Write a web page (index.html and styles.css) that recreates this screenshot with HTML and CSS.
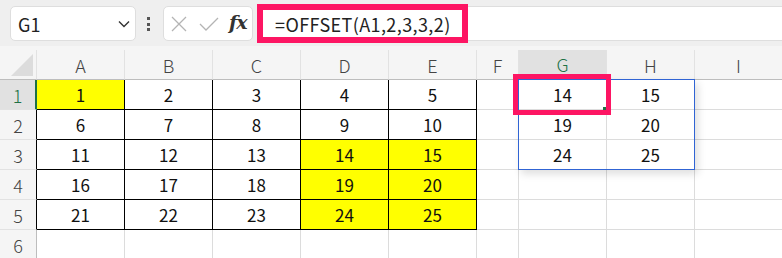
FILE: index.html
```html
<!DOCTYPE html>
<html lang="ja">
<head>
<meta charset="utf-8">
<link rel="stylesheet" href="styles.css">
</head>
<body>
<div class="toolbar">
  <div class="namebox">
    <span class="name">G1</span>
    <svg class="chev" width="12" height="8" viewBox="0 0 12 8"><path d="M1 1.5 L6 6.5 L11 1.5" fill="none" stroke="#333" stroke-width="1.4"/></svg>
  </div>
  <div class="vdots"><i></i><i></i><i></i></div>
  <div class="fbtns">
    <svg class="ico-x" width="16" height="16" viewBox="0 0 16 16"><path d="M1 1 L15 15 M15 1 L1 15" stroke="#b4b4b4" stroke-width="1.3" fill="none"/></svg>
    <svg class="ico-ok" width="20" height="14" viewBox="0 0 20 14"><path d="M1 7 L7 13 L19 1" stroke="#b4b4b4" stroke-width="1.3" fill="none"/></svg>
    <span class="fx">fx</span>
  </div>
  <div class="formula"><span class="ftext">=OFFSET(A1,2,3,3,2)</span></div>
  <div class="mark mark-formula"></div>
</div>
<div class="sheet">
  <div class="corner"><svg width="22" height="22" viewBox="0 0 22 22"><path d="M22 0 L22 22 L0 22 Z" fill="#dcdcdc"/></svg></div>
  <div class="ch">A</div><div class="ch">B</div><div class="ch">C</div><div class="ch">D</div><div class="ch">E</div><div class="ch">F</div><div class="ch sel">G</div><div class="ch">H</div><div class="ch">I</div>

  <div class="rh sel">1</div>
  <div class="c b y">1</div><div class="c b">2</div><div class="c b">3</div><div class="c b">4</div><div class="c b">5</div><div class="c"></div><div class="c">14</div><div class="c">15</div><div class="c"></div>

  <div class="rh bk">2</div>
  <div class="c b">6</div><div class="c b">7</div><div class="c b">8</div><div class="c b">9</div><div class="c b">10</div><div class="c"></div><div class="c">19</div><div class="c">20</div><div class="c"></div>

  <div class="rh bk">3</div>
  <div class="c b">11</div><div class="c b">12</div><div class="c b">13</div><div class="c b y">14</div><div class="c b y">15</div><div class="c"></div><div class="c">24</div><div class="c">25</div><div class="c"></div>

  <div class="rh bk">4</div>
  <div class="c b">16</div><div class="c b">17</div><div class="c b">18</div><div class="c b y">19</div><div class="c b y">20</div><div class="c"></div><div class="c"></div><div class="c"></div><div class="c"></div>

  <div class="rh bk">5</div>
  <div class="c b">21</div><div class="c b">22</div><div class="c b">23</div><div class="c b y">24</div><div class="c b y">25</div><div class="c"></div><div class="c"></div><div class="c"></div><div class="c"></div>

  <div class="rh">6</div>
  <div class="c"></div><div class="c"></div><div class="c"></div><div class="c"></div><div class="c"></div><div class="c"></div><div class="c"></div><div class="c"></div><div class="c"></div>

  <div class="spill"></div>
  <div class="handle"></div>
  <div class="mark mark-cell"></div>
</div>
</body>
</html>
```
FILE: styles.css
```css
* { box-sizing: border-box; }
html, body { margin: 0; padding: 0; }
body {
  width: 782px;
  height: 258px;
  overflow: hidden;
  background: #efefef;
  font-family: "Noto Sans CJK JP", "Noto Sans", sans-serif;
  color: #111;
}
.toolbar {
  position: relative;
  height: 46px;
  display: flex;
  align-items: flex-start;
  padding: 6px 0 0 10px;
}
.namebox {
  width: 126px;
  height: 35px;
  background: #fff;
  border: 1px solid #dedede;
  border-radius: 5px;
  display: flex;
  align-items: center;
  justify-content: space-between;
  padding: 0 5px 0 7px;
}
.name { font-size: 18px; color: #222; line-height: 1; }
.chev { margin-top: 1px; }
.vdots {
  width: 4px;
  margin: 11px 12px 0 11px;
  display: flex;
  flex-direction: column;
  gap: 2.5px;
}
.vdots i { display: block; width: 3px; height: 3px; background: #555; }
.fbtns {
  width: 90px;
  height: 35px;
  background: #fff;
  border: 1px solid #dedede;
  border-radius: 5px;
  display: flex;
  align-items: center;
  padding: 0 0 0 7px;
}
.ico-x { margin-right: 12px; }
.ico-ok { margin-right: 10px; }
.fx {
  font-family: "DejaVu Serif", "Liberation Serif", serif;
  font-style: italic;
  font-weight: bold;
  font-size: 19px;
  color: #333;
  line-height: 1;
  margin-top: -3px;
  letter-spacing: -1px;
}
.formula {
  flex: 1;
  height: 35px;
  margin-left: 4px;
  background: #fff;
  border: 1px solid #dedede;
  border-right: none;
  border-radius: 5px 0 0 5px;
  display: flex;
  align-items: center;
  padding-left: 17px;
}
.ftext { font-size: 18px; color: #222; line-height: 1; letter-spacing: 0.4px; }
.mark { position: absolute; border-style: solid; border-color: #fd1563; }
.mark-formula { left: 257px; top: 4px; width: 211px; height: 39px; border-width: 6px; }

.sheet {
  position: relative;
  background: #f5f5f5;
  padding-top: 4px;
  display: grid;
  grid-template-columns: 37px repeat(5, 88px) 42px 88px 88px 88px;
  grid-auto-rows: 30px;
}
.corner {
  border-right: 1px solid #e2e2e2;
  border-bottom: 1px solid #bdbdbd;
  display: flex;
  align-items: flex-end;
  justify-content: flex-end;
  padding: 0 3px 3px 0;
}
.ch {
  border-right: 1px solid #e2e2e2;
  border-bottom: 1px solid #bdbdbd;
  display: flex;
  align-items: center;
  justify-content: center;
  font-size: 18px;
  color: #444;
  font-weight: 300;
}
.ch.sel { background: #e1e1e1; color: #1e7145; border-bottom: 2px solid #1e7145; }
.rh {
  border-right: 1px solid #bdbdbd;
  border-bottom: 1px solid #e2e2e2;
  display: flex;
  align-items: center;
  justify-content: center;
  font-size: 18px;
  color: #444;
  font-weight: 300;
}
.rh.bk { border-right-color: #000; }
.rh.sel { background: #e1e1e1; color: #1e7145; border-right: 2px solid #1e7145; }
.c {
  background: #fff;
  border-right: 1px solid #dcdcdc;
  border-bottom: 1px solid #dcdcdc;
  display: flex;
  align-items: center;
  justify-content: center;
  font-size: 17px;
  color: #111;
}
.c.b { border-right-color: #000; border-bottom-color: #000; }
.c.y { background: #ffff00; }
.spill {
  position: absolute;
  left: 518px;
  top: 33px;
  width: 177px;
  height: 91px;
  border: 1px solid #3064d4;
  box-shadow: 3px 4px 8px rgba(0, 0, 0, 0.13);
  pointer-events: none;
}
.handle {
  position: absolute;
  left: 603px;
  top: 61px;
  width: 3px;
  height: 3px;
  background: #1e7145;
}
.mark-cell { left: 513px; top: 28px; width: 98px; height: 41px; border-width: 5px; }
```
